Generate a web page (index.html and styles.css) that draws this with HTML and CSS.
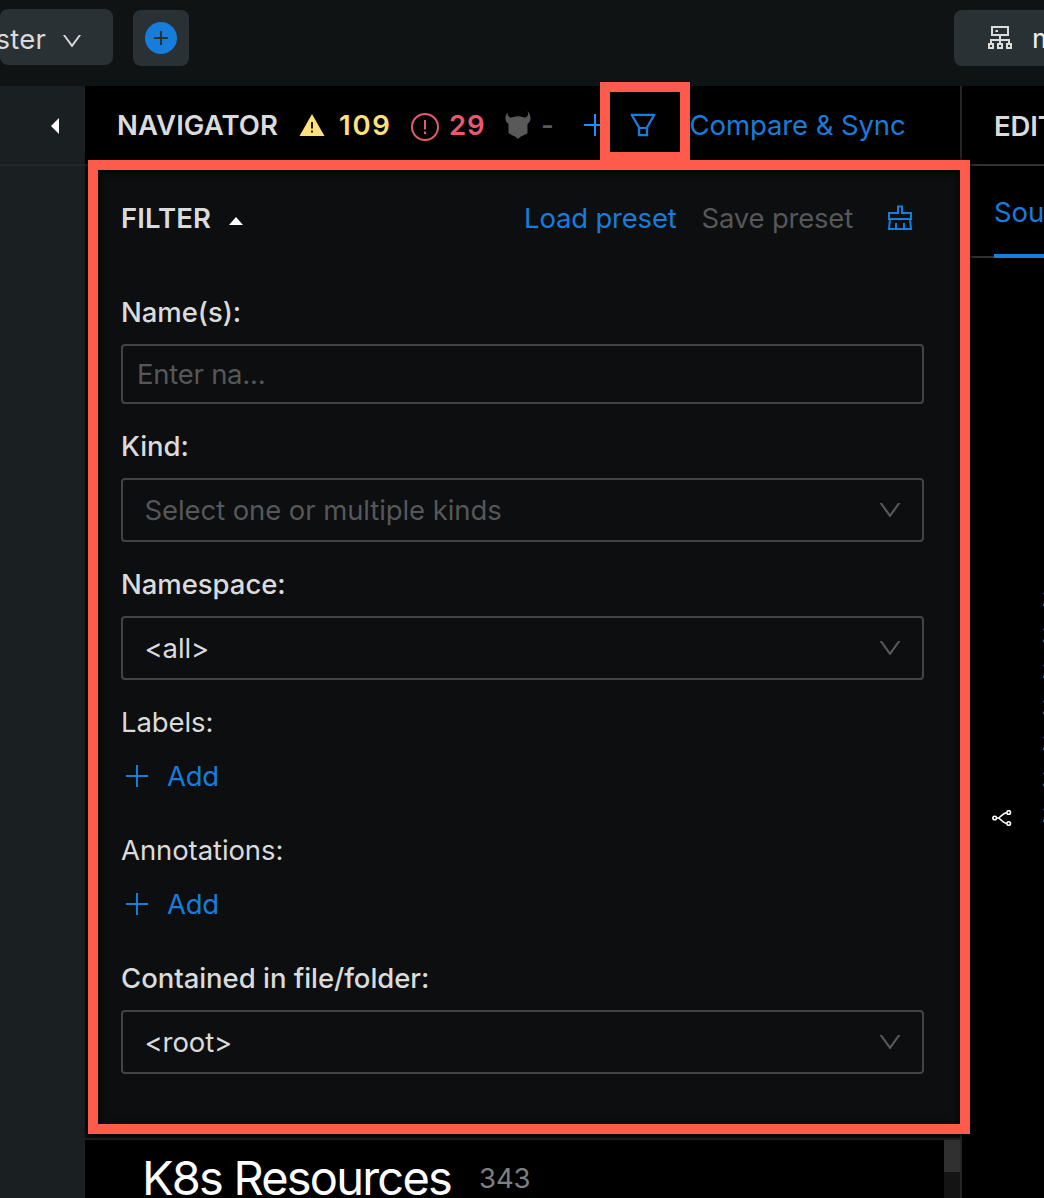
FILE: index.html
```html
<!DOCTYPE html>
<html lang="en">
<head>
<meta charset="utf-8">
<title>Navigator</title>
<link rel="stylesheet" href="styles.css">
</head>
<body>
<svg width="0" height="0" class="defs">
  <symbol id="down" viewBox="0 0 1024 1024"><path d="M884 256h-75c-5.1 0-9.9 2.5-12.9 6.6L512 654.2 227.9 262.6c-3-4.1-7.8-6.6-12.9-6.6h-75c-6.5 0-10.3 7.4-6.5 12.7l352.6 486.1c12.8 17.6 39 17.6 51.7 0l352.6-486.1c3.9-5.3.1-12.7-6.4-12.7z"/></symbol>
  <symbol id="plus" viewBox="0 0 22 22"><path d="M10 0h2v10h10v2H12v10h-2V12H0v-2h10z"/></symbol>
</svg>
<div class="app">
  <header class="topbar">
    <div class="branch"><span>master</span><svg class="branch-arrow"><use href="#down"/></svg></div>
    <div class="new"><svg width="32" height="32" viewBox="0 0 32 32"><circle cx="16" cy="16" r="16" fill="#177ddc"/><path d="M16 9v14M9 16h14" stroke="#2a3134" stroke-width="2"/></svg></div>
    <div class="cluster">
      <svg width="24" height="24" viewBox="0 0 24 24" fill="none" stroke="#dcdcdc" stroke-width="2"><path d="M4 1h16v8H4zM12 9v9M3 18v-4h18v4M1 18h4v4H1zM10 18h4v4h-4zM19 18h4v4h-4z"/><path d="M7.500 5h2.500"/></svg>
      <span>minikube</span>
    </div>
  </header>
  <main class="workspace">
    <aside class="rail"><div class="rail-head"><svg width="8" height="16" viewBox="0 0 8 16"><path d="M8 0v16L0 8z" fill="#fff"/></svg></div></aside>
    <section class="navigator">
      <div class="nav-head">
        <h1>NAVIGATOR</h1>
        <svg class="warn-icon" width="26" height="22" viewBox="0 0 26 22"><path d="M13 0l12.5 22H.5z" fill="#ffe07d"/><path d="M13 8v6.500M13 16.500v2" stroke="#1c1600" stroke-width="2"/></svg>
        <b class="warn">109</b>
        <svg class="err-icon" width="28" height="28" viewBox="0 0 28 28" fill="none" stroke="#e8596e" stroke-width="2"><circle cx="14" cy="14" r="13"/><path d="M14 7v9.500M14 18.500v2.500"/></svg>
        <b class="err">29</b>
        <svg class="bull" width="26" height="28" viewBox="0 0 26 28" fill="#595959"><path d="M3 1C0 4-.5 9 2 11.500l1.500 1.500v9c2 2 6 2.500 9.500 6 3.500-3.500 7.500-4 9.500-6v-9L24 11.500C26.500 9 26 4 22.500 0c1 3 .5 5-1.500 6.500-1.500 0-2.500 0-3.500-.5-3-1-6-1-9 0-1 .5-2 .5-3.500.5C2.500 5 2.200 3 3 1z"/></svg>
        <b class="dash">-</b>
        <svg class="nav-plus"><use href="#plus"/></svg>
        <svg class="funnel" viewBox="0 0 1024 1024"><path d="M880.1 154H143.900c-24.500 0-39.800 26.700-27.500 48L349 597.400V838c0 17.700 14.200 32 31.800 32h262.400c17.600 0 31.800-14.300 31.800-32V597.400L907.700 202c12.200-21.300-3.100-48-27.600-48zM603.400 798H420.600V642h182.900v156zm9.600-236.600l-9.500 16.600h-183l-9.500-16.600L212.700 226h598.600L613 561.400z"/></svg>
        <a class="compare">Compare &amp; Sync</a>
      </div>
      <div class="filter">
        <div class="filter-head">
          <h2>FILTER</h2>
          <svg class="caret" width="14" height="8" viewBox="0 0 14 8"><path d="M7 0l7 8H0z" fill="#fff"/></svg>
          <a class="load">Load preset</a>
          <span class="save">Save preset</span>
          <svg class="brush" width="26" height="26" viewBox="0 0 26 26" fill="none" stroke="#177ddc" stroke-width="2"><path d="M11 8V1.500h4V8h9v6H2V8zM3 14L2 24h22l-1-10M9 24v-6M17 24v-6"/></svg>
        </div>
        <div class="field"><label class="strong">Name(s):</label><div class="input muted">Enter na...</div></div>
        <div class="field"><label class="strong">Kind:</label><div class="select muted"><span>Select one or multiple kinds</span><svg><use href="#down"/></svg></div></div>
        <div class="field"><label class="strong">Namespace:</label><div class="select"><span>&lt;all&gt;</span><svg><use href="#down"/></svg></div></div>
        <div class="field adder"><label>Labels:</label><a class="add"><svg><use href="#plus"/></svg><span>Add</span></a></div>
        <div class="field adder"><label>Annotations:</label><a class="add"><svg><use href="#plus"/></svg><span>Add</span></a></div>
        <div class="field"><label class="strong">Contained in file/folder:</label><div class="select"><span>&lt;root&gt;</span><svg><use href="#down"/></svg></div></div>
      </div>
      <div class="resources">
        <div class="res-title"><span class="k8s">K8s Resources</span><span class="count">343</span></div>
        <div class="scrollbar"><div class="thumb"></div></div>
      </div>
    </section>
    <section class="editor">
      <div class="editor-head">EDITOR</div>
      <div class="tabs"><span class="tab">Source</span></div>
      <div class="code">
        <svg class="graph" width="20" height="16" viewBox="0 0 20 16" fill="none" stroke="#fff" stroke-width="1.600"><circle cx="2.700" cy="8" r="1.800"/><circle cx="16.700" cy="2.500" r="1.800"/><circle cx="16.700" cy="13.500" r="1.800"/><path d="M4.500 8h2.300M14.500 2.700c-3 .2-5 3-7.700 5.300 2.700 2.300 4.700 5.100 7.700 5.300"/></svg>
        <div class="lines"><span>20</span><span>21</span><span>22</span><span>23</span><span>24</span><span>25</span><span>26</span></div>
      </div>
    </section>
  </main>
  <div class="mark mark-panel"></div>
  <div class="mark mark-icon"></div>
</div>
</body>
</html>
```

FILE: styles.css
```css
* { box-sizing: border-box; }
body { margin: 0; background: #000; }
.defs { position: absolute; }
svg { display: block; flex: none; }
.app {
  position: relative;
  display: flex;
  flex-direction: column;
  width: 1044px;
  height: 1198px;
  overflow: hidden;
  font: 27.5px/44px Inter, sans-serif;
  letter-spacing: -0.09px;
  color: #dbdbdb;
  white-space: nowrap;
}
.topbar {
  display: flex;
  flex: none;
  height: 86px;
  padding-top: 9px;
  background: #0f1314;
}
.branch, .new, .cluster {
  display: flex;
  flex: none;
  align-items: center;
  height: 56px;
  background: #2a3134;
  border-radius: 8px;
}
.branch {
  width: 113px;
  padding: 4px 29px 0 0;
  justify-content: flex-end;
  gap: 14px;
  letter-spacing: 0.2px;
}
.branch-arrow { width: 24px; height: 24px; margin-top: 4px; fill: #dbdbdb; }
.new { width: 56px; margin: 1px 0 0 20px; justify-content: center; }
.cluster { width: 300px; margin: 1px 0 0 765px; padding-left: 34px; gap: 20px; color: #f0f0f0; }
.workspace { display: grid; grid-template-columns: 85px 877px 82px; flex: 1; min-height: 0; }
.rail { background: #1a1f21; }
.rail-head {
  display: flex;
  align-items: center;
  justify-content: flex-end;
  height: 80px;
  padding: 2px 26px 0 0;
  border-bottom: 2px solid #262828;
}
.navigator { display: flex; flex-direction: column; min-width: 0; min-height: 0; border-right: 2px solid #262626; }
.nav-head {
  display: flex;
  flex: none;
  align-items: center;
  height: 80px;
  padding-left: 32px;
  border-bottom: 2px solid #262626;
}
h1, h2 { margin: 0; font-size: 27.5px; font-weight: 600; line-height: 44px; letter-spacing: 0.1px; }
h1 { width: 182px; }
b { font-weight: 600; }
.warn-icon { margin-right: 13px; }
.warn { width: 73px; padding-left: 1px; color: #ffe07d; letter-spacing: 1.8px; }
.err-icon { margin-right: 10px; margin-top: 3px; }
.err { width: 56px; color: #e8596e; letter-spacing: 0.8px; }
.bull { margin-right: 10px; }
.dash { width: 43px; color: #595959; }
.nav-plus { width: 22px; height: 22px; fill: #1890ff; }
.funnel { width: 32px; height: 32px; margin: 0 30.5px 0 21px; fill: #177ddc; }
a { color: #177ddc; }
.filter {
  display: flex;
  flex: none;
  flex-direction: column;
  gap: 20px;
  height: 974px;
  padding: 30px 36px 0;
  background: #0c0e10;
  border-bottom: 2px solid #1f1f1f;
}
.filter-head { display: flex; align-items: center; height: 44px; margin-bottom: 30px; }
.caret { margin: 5px 0 0 18px; }
.load { margin-left: auto; letter-spacing: -0.2px; }
.save { margin-left: 25px; color: #565758; letter-spacing: -0.2px; }
.brush { margin: 0 11px 0 34px; }
.field { display: flex; flex-direction: column; gap: 10px; }
label { height: 44px; }
.strong { font-weight: 500; letter-spacing: -0.04px; }
.input, .select {
  display: flex;
  align-items: center;
  height: 60px;
  padding: 0 0 0 14px;
  border: 2px solid #434343;
  border-radius: 4px;
}
.input { letter-spacing: -0.25px; }
.select { height: 64px; padding: 0 18px 0 21.5px; justify-content: space-between; }
.select svg { width: 28px; height: 28px; fill: #565758; }
.muted { color: #565758; }
.adder { margin-bottom: 10px; }
.add { display: flex; align-items: center; gap: 19px; height: 44px; padding-left: 5px; letter-spacing: -0.3px; }
.add svg { width: 22px; height: 22px; fill: #177ddc; }
.resources { display: flex; flex: 1; justify-content: space-between; min-height: 0; overflow: hidden; }
.res-title { display: flex; align-items: center; height: 78px; padding: 0 0 2px 57px; }
.k8s { font-size: 47px; line-height: 76px; letter-spacing: -1.8px; color: #fff; }
.count { margin-left: 28px; color: #7d8184; }
.scrollbar { width: 16px; background: #141414; }
.thumb { height: 32px; background: #303030; }
.editor { overflow: hidden; }
.editor-head { height: 80px; padding: 18px 0 0 32px; border-bottom: 2px solid #303030; font-weight: 600; }
.tabs { display: flex; height: 92px; padding-left: 32px; border-bottom: 2px solid #303030; }
.tab { height: 92px; padding-top: 24px; border-bottom: 4px solid #177ddc; color: #177ddc; }
.code { display: flex; align-items: flex-start; padding-top: 324px; }
.graph { margin: 228px 29.5px 0 30px; }
.lines { display: flex; flex-direction: column; font: 24px/36px "Liberation Mono", monospace; color: #858585; }
.mark { position: absolute; border: 10px solid #ff5b4d; }
.mark-panel { left: 88px; top: 160px; width: 882px; height: 974px; box-shadow: 0 1px 6px #000, inset 0 2px 8px rgba(0, 0, 0, 0.8); }
.mark-icon { left: 600px; top: 82px; width: 90px; height: 80px; }
```
